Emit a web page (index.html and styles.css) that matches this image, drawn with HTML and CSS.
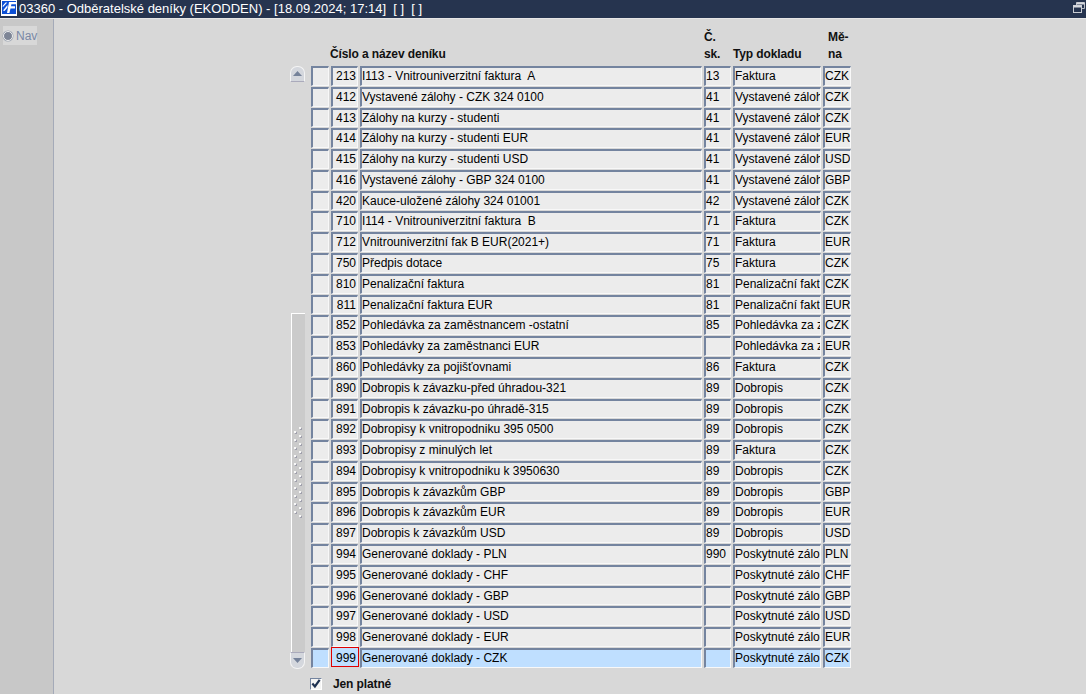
FILE: index.html
```html
<!DOCTYPE html>
<html lang="cs">
<head>
<meta charset="utf-8">
<title>Odběratelské deníky</title>
<link rel="stylesheet" href="styles.css">
</head>
<body>
<header class="titlebar">
  <svg class="logo" width="16" height="16" viewBox="0 0 16 16"><rect width="16" height="16" fill="#fff"/><rect x="1" y="1" width="14" height="13" fill="#0b4fd6"/><path d="M8 2h7v2.2h-4.6l-.4 2h4v2.2h-4.5L8.4 13H6L8 2z" fill="#fff"/><path d="M2 10.5l4.5-5.5v2.6L3.5 11zM1.500 6l3-3.500h1.800L2 7z" fill="#fff"/></svg>
  <span class="title">03360 - Odběratelské deníky (EKODDEN) - [18.09.2024; 17:14] &nbsp;[ ] &nbsp;[ ]</span>
  <svg class="restore" width="12" height="11" viewBox="0 0 12 11"><path d="M3.5 3V.5h8v6H9" fill="none" stroke="#b8bcc4"/><path d="M3.500 1.500h8" stroke="#d8dbe0" stroke-width="2"/><rect x=".5" y="3.500" width="8" height="7" fill="#26344f" stroke="#c8ccd2"/><path d="M.5 4.500h8" stroke="#d8dbe0" stroke-width="2"/></svg>
</header>
<div class="workspace">
  <aside class="sidebar">
    <div class="nav"><span class="radio"></span><span>Nav</span></div>
  </aside>
  <main class="content">
    <div class="form">
      <div class="scrollbar">
        <div class="sb-btn sb-up"><svg width="9" height="5" viewBox="0 0 9 5"><path d="M4.5 0L9 5H0z" fill="#75829a"/></svg></div>
        <div class="sb-gap"></div>
        <div class="sb-track">
          <svg class="sb-grip" width="9" height="92">
            <defs>
              <pattern id="grip" width="9" height="8" patternUnits="userSpaceOnUse">
                <rect x="1" y="5" width="2" height="2" fill="#a0a0ac"/>
                <rect x="0" y="4" width="2" height="2" fill="#f8f8f8"/>
                <rect x="6" y="1" width="2" height="2" fill="#a0a0ac"/>
                <rect x="5" y="0" width="2" height="2" fill="#f8f8f8"/>
              </pattern>
            </defs>
            <rect width="9" height="92" fill="url(#grip)"/>
          </svg>
        </div>
        <div class="sb-btn sb-down"><svg width="9" height="5" viewBox="0 0 9 5"><path d="M4.5 5L9 0H0z" fill="#75829a"/></svg></div>
      </div>
      <div class="table">
        <div class="th th-name">Číslo a název deníku</div>
        <div class="th">Č.<br>sk.</div>
        <div class="th">Typ dokladu</div>
        <div class="th th-cur">Mě-<br>na</div>

        <div class="c"></div><div class="c n">213</div><div class="c">I113 - Vnitrouniverzitní faktura&nbsp; A</div><div class="c">13</div><div class="c">Faktura</div><div class="c">CZK</div>
        <div class="c"></div><div class="c n">412</div><div class="c">Vystavené zálohy - CZK 324 0100</div><div class="c">41</div><div class="c">Vystavené zálohy</div><div class="c">CZK</div>
        <div class="c"></div><div class="c n">413</div><div class="c">Zálohy na kurzy - studenti</div><div class="c">41</div><div class="c">Vystavené zálohy</div><div class="c">CZK</div>
        <div class="c"></div><div class="c n">414</div><div class="c">Zálohy na kurzy - studenti EUR</div><div class="c">41</div><div class="c">Vystavené zálohy</div><div class="c">EUR</div>
        <div class="c"></div><div class="c n">415</div><div class="c">Zálohy na kurzy - studenti USD</div><div class="c">41</div><div class="c">Vystavené zálohy</div><div class="c">USD</div>
        <div class="c"></div><div class="c n">416</div><div class="c">Vystavené zálohy - GBP 324 0100</div><div class="c">41</div><div class="c">Vystavené zálohy</div><div class="c">GBP</div>
        <div class="c"></div><div class="c n">420</div><div class="c">Kauce-uložené zálohy 324 01001</div><div class="c">42</div><div class="c">Vystavené zálohy</div><div class="c">CZK</div>
        <div class="c"></div><div class="c n">710</div><div class="c">I114 - Vnitrouniverzitní faktura&nbsp; B</div><div class="c">71</div><div class="c">Faktura</div><div class="c">CZK</div>
        <div class="c"></div><div class="c n">712</div><div class="c">Vnitrouniverzitní fak B EUR(2021+)</div><div class="c">71</div><div class="c">Faktura</div><div class="c">EUR</div>
        <div class="c"></div><div class="c n">750</div><div class="c">Předpis dotace</div><div class="c">75</div><div class="c">Faktura</div><div class="c">CZK</div>
        <div class="c"></div><div class="c n">810</div><div class="c">Penalizační faktura</div><div class="c">81</div><div class="c">Penalizační faktura</div><div class="c">CZK</div>
        <div class="c"></div><div class="c n">811</div><div class="c">Penalizační faktura EUR</div><div class="c">81</div><div class="c">Penalizační faktura</div><div class="c">EUR</div>
        <div class="c"></div><div class="c n">852</div><div class="c">Pohledávka za zaměstnancem -ostatní</div><div class="c">85</div><div class="c">Pohledávka za zam</div><div class="c">CZK</div>
        <div class="c"></div><div class="c n">853</div><div class="c">Pohledávky za zaměstnanci EUR</div><div class="c"></div><div class="c">Pohledávka za zam</div><div class="c">EUR</div>
        <div class="c"></div><div class="c n">860</div><div class="c">Pohledávky za pojišťovnami</div><div class="c">86</div><div class="c">Faktura</div><div class="c">CZK</div>
        <div class="c"></div><div class="c n">890</div><div class="c">Dobropis k závazku-před úhradou-321</div><div class="c">89</div><div class="c">Dobropis</div><div class="c">CZK</div>
        <div class="c"></div><div class="c n">891</div><div class="c">Dobropis k závazku-po úhradě-315</div><div class="c">89</div><div class="c">Dobropis</div><div class="c">CZK</div>
        <div class="c"></div><div class="c n">892</div><div class="c">Dobropisy k vnitropodniku 395 0500</div><div class="c">89</div><div class="c">Dobropis</div><div class="c">CZK</div>
        <div class="c"></div><div class="c n">893</div><div class="c">Dobropisy z minulých let</div><div class="c">89</div><div class="c">Faktura</div><div class="c">CZK</div>
        <div class="c"></div><div class="c n">894</div><div class="c">Dobropisy k vnitropodniku k 3950630</div><div class="c">89</div><div class="c">Dobropis</div><div class="c">CZK</div>
        <div class="c"></div><div class="c n">895</div><div class="c">Dobropis k závazkům GBP</div><div class="c">89</div><div class="c">Dobropis</div><div class="c">GBP</div>
        <div class="c"></div><div class="c n">896</div><div class="c">Dobropis k závazkům EUR</div><div class="c">89</div><div class="c">Dobropis</div><div class="c">EUR</div>
        <div class="c"></div><div class="c n">897</div><div class="c">Dobropis k závazkům USD</div><div class="c">89</div><div class="c">Dobropis</div><div class="c">USD</div>
        <div class="c"></div><div class="c n">994</div><div class="c">Generované doklady - PLN</div><div class="c">990</div><div class="c">Poskytnuté zálohy</div><div class="c">PLN</div>
        <div class="c"></div><div class="c n">995</div><div class="c">Generované doklady - CHF</div><div class="c"></div><div class="c">Poskytnuté zálohy</div><div class="c">CHF</div>
        <div class="c"></div><div class="c n">996</div><div class="c">Generované doklady - GBP</div><div class="c"></div><div class="c">Poskytnuté zálohy</div><div class="c">GBP</div>
        <div class="c"></div><div class="c n">997</div><div class="c">Generované doklady - USD</div><div class="c"></div><div class="c">Poskytnuté zálohy</div><div class="c">USD</div>
        <div class="c"></div><div class="c n">998</div><div class="c">Generované doklady - EUR</div><div class="c"></div><div class="c">Poskytnuté zálohy</div><div class="c">EUR</div>
        <div class="c s"></div><div class="c n s focus">999</div><div class="c s">Generované doklady - CZK</div><div class="c s"></div><div class="c s">Poskytnuté zálohy</div><div class="c s">CZK</div>
      </div>
    </div>
    <label class="check">
      <span class="box"><svg width="11" height="11" viewBox="0 0 11 11"><path d="M1.500 5.500l2.800 3.200L9.500 1.500" fill="none" stroke="#1d3050" stroke-width="2.4"/></svg></span>
      <span>Jen platné</span>
    </label>
  </main>
</div>
</body>
</html>
```
FILE: styles.css
```css
html, body {
  margin: 0;
  height: 100%;
  overflow: hidden;
}
body {
  display: flex;
  flex-direction: column;
  background: #d8d8d8;
  font: 12px/14px "Liberation Sans", Arial, sans-serif;
  color: #000;
}
.titlebar {
  height: 19px;
  box-sizing: border-box;
  flex: none;
  display: flex;
  align-items: flex-start;
  gap: 2px;
  background: #26344f;
  border-bottom: 1px solid #e6e6e6;
  color: #fff;
  padding: 0 1px;
}
.logo { flex: none; }
.title {
  flex: 1;
  white-space: pre;
  font-size: 13px;
  line-height: 17px;
}
.restore { flex: none; margin-top: 2px; }
.workspace {
  flex: 1;
  display: flex;
  min-height: 0;
}
.sidebar {
  width: 50px;
  flex: none;
  background: #c8c8c8;
  border-right: 1px solid #a4aab8;
  padding: 7px 0 0 3px;
}
.nav {
  width: 34px;
  height: 19px;
  display: flex;
  align-items: center;
  gap: 3px;
  background: #d8d8d8;
  color: #7a88a6;
}
.radio {
  width: 10px;
  height: 10px;
  border-radius: 50%;
  box-sizing: border-box;
  background: #7d8596;
  border: 1px solid #eee;
  box-shadow: 0 0 0 .5px #9aa2b0;
  flex: none;
}
.content {
  flex: 1;
  padding-left: 236px;
  min-width: 0;
}
.form {
  display: flex;
  gap: 6px;
}
.scrollbar {
  width: 15px;
  height: 603px;
  align-self: flex-end;
  display: flex;
  flex-direction: column;
}
.sb-btn {
  height: 16px;
  flex: none;
  box-sizing: border-box;
  display: flex;
  align-items: center;
  justify-content: center;
  background: #d4d7dd;
  border: 1px solid #f4f4f4;
}
.sb-up { border-radius: 7px 7px 0 0; border-bottom-color: #aab; }
.sb-down { border-radius: 0 0 7px 7px; border-top-color: #aab; height: 17px; }
.sb-gap { height: 231px; flex: none; }
.sb-track {
  flex: 1;
  margin-left: 1px;
  background: #cbcbcb;
  border-left: 1px solid #fff;
  border-top: 1px solid #fff;
  padding: 113px 0 0 2px;
}
.sb-grip { display: block; }
.table {
  display: grid;
  grid-template-columns: 18px 27px 342px 27px 88px 28px;
  grid-template-rows: 47px;
  grid-auto-rows: 20.786px;
  column-gap: 2px;
}
.th {
  font-weight: bold;
  line-height: 17px;
  letter-spacing: -.12px;
  align-self: end;
  padding-bottom: 3px;
  color: #111;
  white-space: nowrap;
}
.th-name { grid-column: 1 / 4; margin-left: 19px; }
.th-cur { margin-left: 5px; }
.c {
  box-sizing: border-box;
  height: 19.8px;
  background: #ececec;
  border-style: solid;
  border-width: 2px 1px 1px 2px;
  border-color: #74849f #f8f8f8 #f8f8f8 #74849f;
  padding-top: 1px;
  white-space: nowrap;
  overflow: hidden;
  line-height: 15px;
}
.n { text-align: right; padding-right: 1px; }
.s { background: #bfdfff; }
.focus {
  border-color: transparent;
  outline: 1px solid #e00000;
  outline-offset: -1px;
  margin-top: -1px;
  margin-right: -1px;
  padding: 2px 2px 0 0;
  height: 20px;
}
.check {
  display: flex;
  align-items: center;
  gap: 11px;
  margin: 8px 0 0 20px;
  font-weight: bold;
  letter-spacing: -.12px;
  color: #111;
}
.box {
  width: 12px;
  height: 12px;
  box-sizing: border-box;
  background: #f4f4f4;
  border: 1px solid;
  border-color: #74849f #fff #fff #74849f;
  display: flex;
  align-items: center;
  justify-content: center;
}
```
